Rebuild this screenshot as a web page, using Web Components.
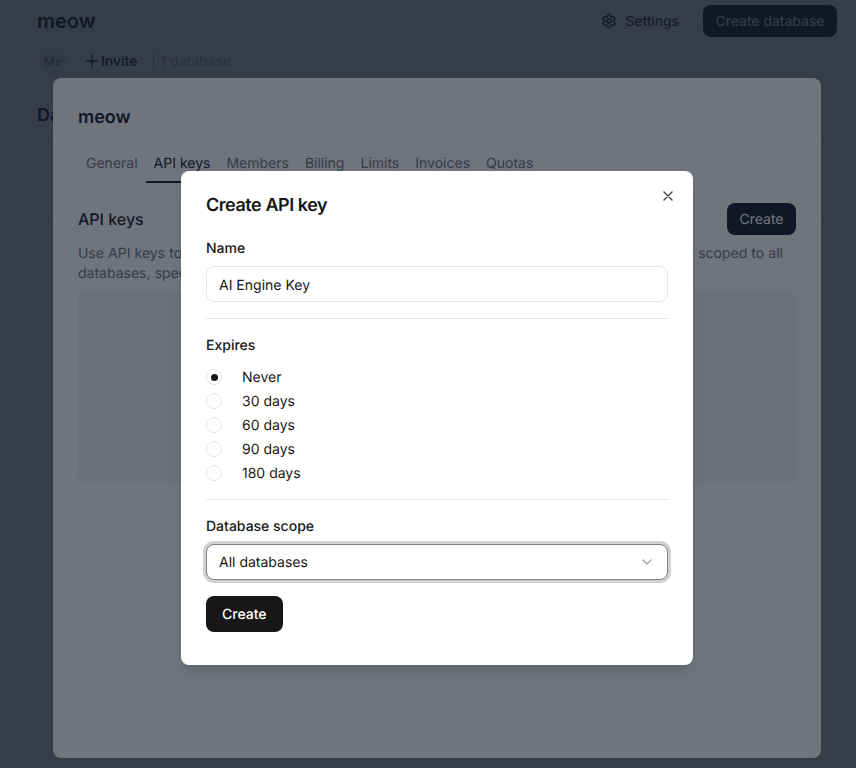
<!DOCTYPE html>
<html lang="en">
<head>
<meta charset="utf-8">
<title>API keys</title>
<style>
  html, body { margin: 0; height: 100%; overflow: hidden; background: #fff; }
  body { font: 14px/20px Inter, "Liberation Sans", sans-serif; color: #111; text-rendering: geometricPrecision; }
</style>
</head>
<body>

<db-page></db-page>

<ui-scrim>
  <settings-panel></settings-panel>
</ui-scrim>
<ui-scrim>
  <api-key-dialog></api-key-dialog>
</ui-scrim>

<script>
// Boton oscuro o con borde, segun el atributo variant
class UiButton extends HTMLElement {
  constructor() {
    super();
    this.attachShadow({ mode: "open" });
    this.shadowRoot.innerHTML = `
      <style>
        :host {
          display: inline-flex;
          align-items: center;
          justify-content: center;
          gap: 8px;
          box-sizing: border-box;
          height: 32px;
          padding: 2px 12.5px 0;
          border-radius: 8px;
          font-size: 14px;
          line-height: 20px;
          background: #131826;
          color: #fff;
        }
        :host([variant="outline"]) {
          background: #fff;
          color: #171717;
          border: 1px solid #e5e7eb;
          padding: 2px 11px 0 10px;
        }
        :host([size="lg"]) { height: 36px; padding: 2px 16px 0; font-weight: 500; background: #171717; }
        ::slotted(svg) { margin-top: -2px; }
      </style>
      <slot></slot>
    `;
  }
}

// Capa oscura sobre todo lo anterior; centra a su hijo en 874x836 como la pagina original
class UiScrim extends HTMLElement {
  constructor() {
    super();
    this.attachShadow({ mode: "open" });
    this.shadowRoot.innerHTML = `
      <style>
        :host {
          position: absolute;
          top: 0;
          left: 0;
          width: 874px;
          height: 836px;
          display: flex;
          align-items: center;
          justify-content: center;
          background: rgba(17, 24, 39, .6);
        }
      </style>
      <slot></slot>
    `;
  }
}

class DbPage extends HTMLElement {
  constructor() {
    super();
    this.attachShadow({ mode: "open" });
    this.shadowRoot.innerHTML = `
      <style>
        :host {
          display: block;
          box-sizing: border-box;
          width: 874px;
          padding: 5px 37px 0;
          color: #111827;
        }
        header { display: flex; align-items: center; justify-content: space-between; height: 32px; }
        h1 { margin: 0; font-size: 20px; line-height: 32px; font-weight: 600; }
        .actions { display: flex; gap: 12px; }
        .meta { display: flex; align-items: center; height: 28px; margin-top: 10px; padding-left: 2px; }
        .avatar {
          box-sizing: border-box;
          width: 28px; height: 28px; padding-top: 2px; border-radius: 50%;
          background: #e9ebee; color: #6b7280;
          display: flex; align-items: center; justify-content: center;
          font-size: 12px;
        }
        .invite { display: flex; align-items: center; gap: 2px; margin-left: 18px; padding-top: 2px; font-weight: 500; color: #111827; }
        .invite svg { margin-top: -2px; }
        .sep { width: 1px; height: 16px; background: #9ca3af; margin: 0 6px 0 16px; }
        .count { color: #9ca3af; padding-top: 2px; }
        h2 { margin: 27px 0 0; font-size: 18px; line-height: 28px; font-weight: 600; }
        .card { height: 80px; box-sizing: border-box; margin-top: 7px; border: 1px solid #e5e7eb; border-radius: 8px; }
      </style>
      <header>
        <h1>meow</h1>
        <div class="actions">
          <ui-button variant="outline">
            <svg width="16" height="16" viewBox="0 0 24 24" fill="none" stroke="currentColor" stroke-width="2" stroke-linecap="round" stroke-linejoin="round" style="display:block">
              <path d="M12.22 2h-.44a2 2 0 0 0-2 2v.18a2 2 0 0 1-1 1.73l-.43.25a2 2 0 0 1-2 0l-.15-.08a2 2 0 0 0-2.73.73l-.22.38a2 2 0 0 0 .73 2.73l.15.1a2 2 0 0 1 1 1.72v.51a2 2 0 0 1-1 1.74l-.15.09a2 2 0 0 0-.73 2.73l.22.38a2 2 0 0 0 2.73.73l.15-.08a2 2 0 0 1 2 0l.43.25a2 2 0 0 1 1 1.73V20a2 2 0 0 0 2 2h.44a2 2 0 0 0 2-2v-.18a2 2 0 0 1 1-1.73l.43-.25a2 2 0 0 1 2 0l.15.08a2 2 0 0 0 2.73-.73l.22-.39a2 2 0 0 0-.73-2.73l-.15-.08a2 2 0 0 1-1-1.74v-.5a2 2 0 0 1 1-1.74l.15-.09a2 2 0 0 0 .73-2.73l-.22-.38a2 2 0 0 0-2.73-.73l-.15.08a2 2 0 0 1-2 0l-.43-.25a2 2 0 0 1-1-1.73V4a2 2 0 0 0-2-2z"/>
              <circle cx="12" cy="12" r="3"/>
            </svg>
            Settings
          </ui-button>
          <ui-button>Create database</ui-button>
        </div>
      </header>
      <div class="meta">
        <div class="avatar">Me</div>
        <div class="invite">
          <svg width="14" height="14" viewBox="0 0 14 14" fill="none" stroke="currentColor" stroke-width="1.3" stroke-linecap="round" style="display:block"><path d="M7 1.5v11M1.5 7h11"/></svg>
          Invite
        </div>
        <div class="sep"></div>
        <div class="count">1 database</div>
      </div>
      <h2>Databases</h2>
      <div class="card"></div>
    `;
  }
}

class SettingsPanel extends HTMLElement {
  constructor() {
    super();
    this.attachShadow({ mode: "open" });
    this.shadowRoot.innerHTML = `
      <style>
        :host {
          display: block;
          box-sizing: border-box;
          width: 768px;
          height: 680px;
          padding: 25px;
          background: #fff;
          border-radius: 8px;
          color: #111827;
        }
        h2 { margin: 0; padding-top: 1px; font-size: 18px; line-height: 27px; font-weight: 600; }
        nav { display: flex; margin-top: 14px; }
        nav span { padding: 9px 8px 9px; color: #6b7280; }
        nav span.on { color: #111827; box-shadow: inset 0 -2px 0 #111827; }
        .head { display: flex; align-items: center; justify-content: space-between; margin-top: 20px; }
        h3 { margin: 0; font-size: 16px; line-height: 24px; font-weight: 500; }
        p { margin: 9px 0 0; color: #6b7280; word-spacing: .2px; }
        .box { height: 192px; margin-top: 7px; border-radius: 8px; background: #f5f5f5; }
      </style>
      <h2>meow</h2>
      <nav>
        <span>General</span><span class="on">API keys</span><span>Members</span><span>Billing</span><span>Limits</span><span>Invoices</span><span>Quotas</span>
      </nav>
      <div class="head">
        <h3>API keys</h3>
        <ui-button>Create</ui-button>
      </div>
      <p>Use API keys to programmatically manage your databases from application. API keys may be scoped to all databases, specific databases or a single branch.</p>
      <div class="box"></div>
    `;
  }
}

// Una opcion del grupo de radios
class UiRadio extends HTMLElement {
  constructor() {
    super();
    this.attachShadow({ mode: "open" });
    this.shadowRoot.innerHTML = `
      <style>
        :host { display: flex; align-items: center; gap: 20px; height: 24px; }
        i {
          width: 16px; height: 16px; box-sizing: border-box;
          border: 1px solid #e5e5e5; border-radius: 50%;
          display: flex; align-items: center; justify-content: center;
        }
        span { padding-top: 2px; }
        :host([checked]) i::after {
          content: ""; width: 7px; height: 7px; border-radius: 50%; background: #171717;
        }
      </style>
      <i></i><span><slot></slot></span>
    `;
  }
}

class ApiKeyDialog extends HTMLElement {
  constructor() {
    super();
    this.attachShadow({ mode: "open" });
    this.shadowRoot.innerHTML = `
      <style>
        :host {
          display: block;
          position: relative;
          box-sizing: border-box;
          width: 512px;
          height: 494px;
          padding: 20px 25px 0;
          background: #fff;
          border-radius: 8px;
          color: #171717;
          box-shadow: 0 10px 15px -3px rgba(0,0,0,.1), 0 4px 6px -4px rgba(0,0,0,.1);
        }
        h2 { margin: 0 0 18px; padding-top: 1px; font-size: 18px; line-height: 28px; font-weight: 600; letter-spacing: -.025em; }
        .close { position: absolute; top: 17px; right: 17px; width: 16px; height: 16px; color: #404040; }
        label { display: block; font-weight: 500; padding-top: 1px; margin-bottom: 7px; }
        .control {
          display: flex; align-items: center; justify-content: space-between;
          box-sizing: border-box; height: 36px; padding: 2px 12px 0;
          border: 1px solid #e5e5e5; border-radius: 8px; background: #fff;
        }
        .control.name { padding-top: 4px; }
        .control svg { margin-top: -2px; }
        .control.focus { border-color: #808080; box-shadow: 0 0 0 3px #d1d1d1; }
        hr { border: 0; border-top: 1px solid #e5e5e5; margin: 16px 0; }
        .radios { margin-top: 9px; margin-bottom: -2px; }
        .submit { margin-top: 16px; display: flex; }
      </style>
      <h2>Create API key</h2>
      <svg class="close" viewBox="0 0 24 24" fill="none" stroke="currentColor" stroke-width="2" stroke-linecap="round" stroke-linejoin="round"><path d="M18 6 6 18M6 6l12 12"/></svg>
      <label>Name</label>
      <div class="control name">AI Engine Key</div>
      <hr>
      <label>Expires</label>
      <div class="radios">
        <ui-radio checked>Never</ui-radio>
        <ui-radio>30 days</ui-radio>
        <ui-radio>60 days</ui-radio>
        <ui-radio>90 days</ui-radio>
        <ui-radio>180 days</ui-radio>
      </div>
      <hr>
      <label>Database scope</label>
      <div class="control focus">
        All databases
        <svg width="16" height="16" viewBox="0 0 24 24" fill="none" stroke="#a3a3a3" stroke-width="2" stroke-linecap="round" stroke-linejoin="round"><path d="m6 9 6 6 6-6"/></svg>
      </div>
      <div class="submit"><ui-button size="lg">Create</ui-button></div>
    `;
  }
}

customElements.define("ui-button", UiButton);
customElements.define("ui-scrim", UiScrim);
customElements.define("ui-radio", UiRadio);
customElements.define("db-page", DbPage);
customElements.define("settings-panel", SettingsPanel);
customElements.define("api-key-dialog", ApiKeyDialog);
</script>
</body>
</html>
